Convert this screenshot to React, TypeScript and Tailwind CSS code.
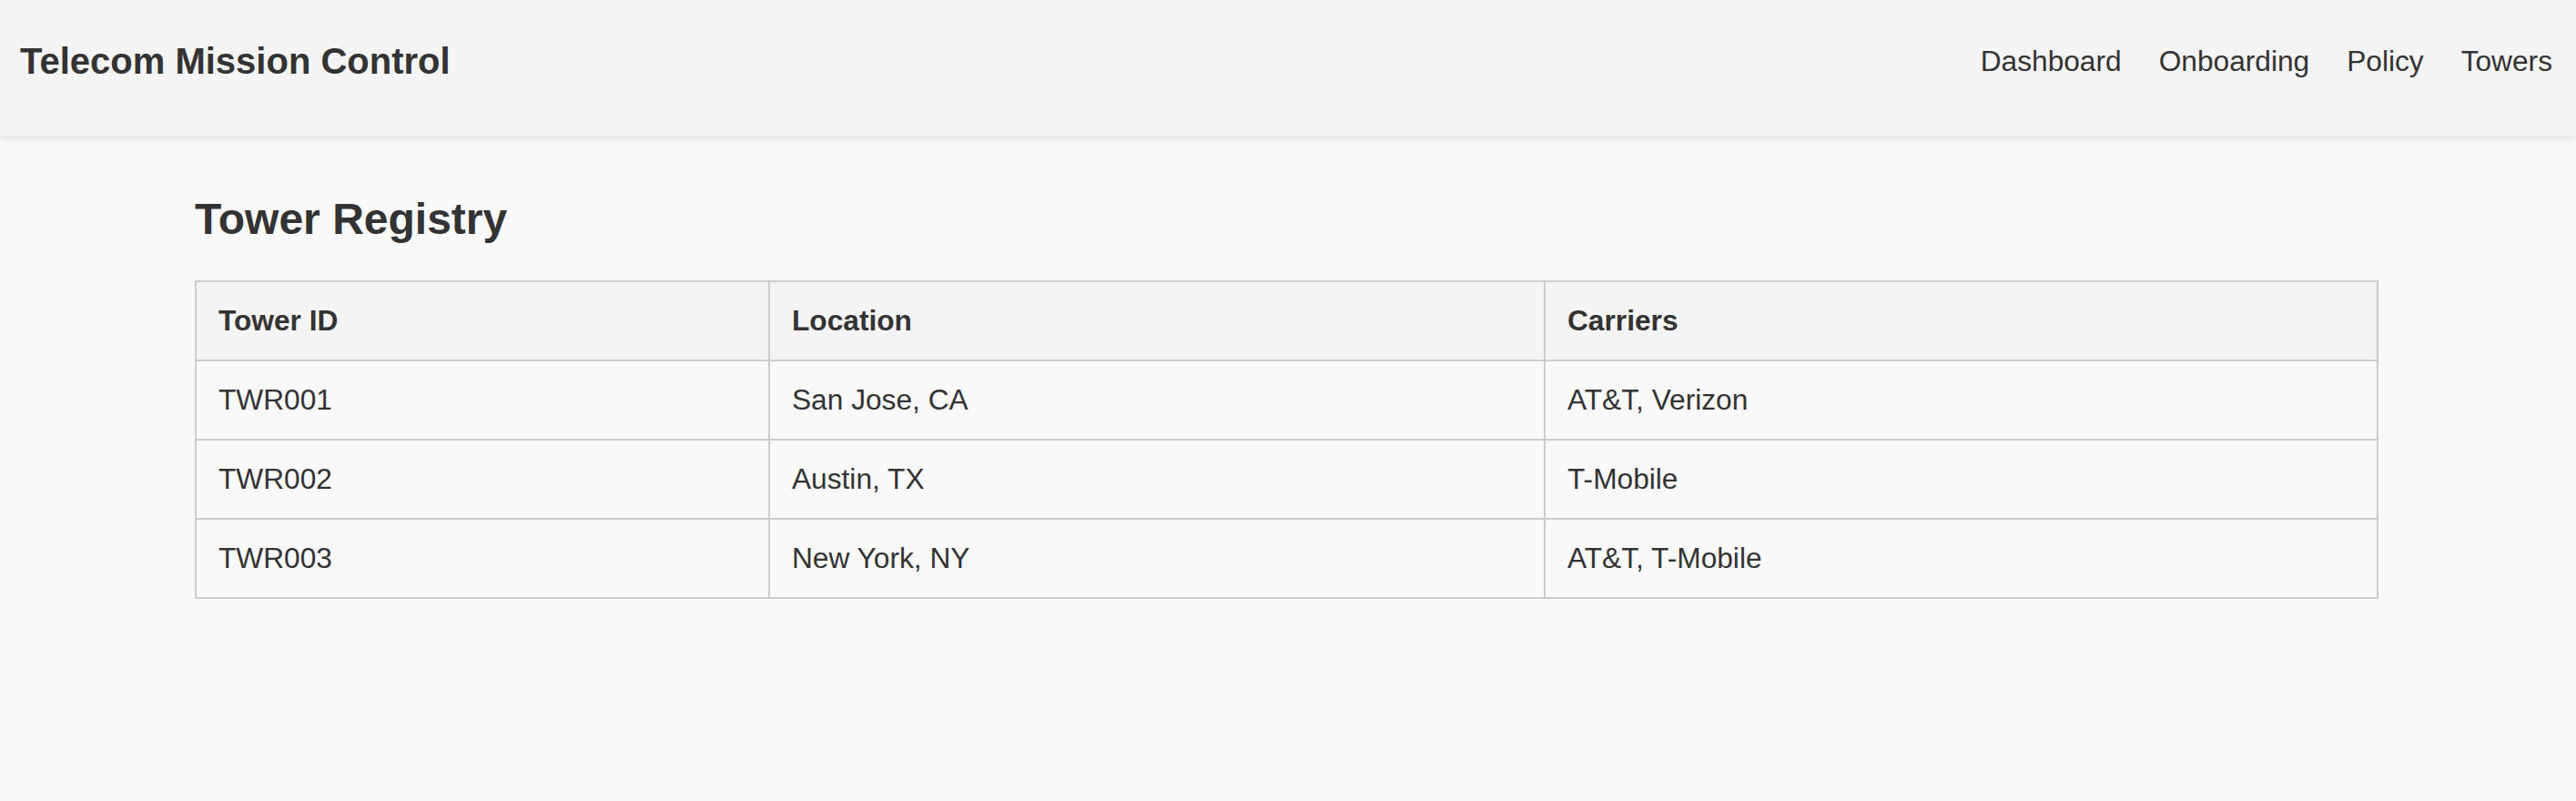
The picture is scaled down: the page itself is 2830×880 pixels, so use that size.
import React from "react";

const rows = [
  { id: "TWR001", loc: "San Jose, CA", carriers: "AT&T, Verizon" },
  { id: "TWR002", loc: "Austin, TX", carriers: "T-Mobile" },
  { id: "TWR003", loc: "New York, NY", carriers: "AT&T, T-Mobile" },
];

export default function App() {
  return (
    <div className="min-h-[880px] bg-[#f9f9f9] text-[#333333] font-['Liberation_Sans',Arial,sans-serif]">
      <header className="relative z-10 flex h-[149px] items-center justify-between bg-[#f4f4f4] pb-[15px] pl-[22px] pr-[26px] shadow-[0_3px_8px_rgba(0,0,0,0.1)]">
        <h1 className="text-[40px] font-bold leading-[46px]">Telecom Mission Control</h1>
        <nav className="flex gap-[41px] text-[31.68px] leading-[36px]">
          <a href="#">Dashboard</a>
          <a href="#">Onboarding</a>
          <a href="#">Policy</a>
          <a href="#">Towers</a>
        </nav>
      </header>
      <main className="pl-[214px] pt-[64px]">
        <h2 className="text-[48px] font-bold leading-[55px]">Tower Registry</h2>
        <table className="mt-[40px] w-[2399px] border-collapse text-[31.68px] leading-[37px]">
          <colgroup>
            <col className="w-[630px]" />
            <col className="w-[852px]" />
            <col />
          </colgroup>
          <thead>
            <tr className="bg-[#f4f4f4]">
              <th className="border-2 border-[#cccccc] px-[24px] py-[24px] text-left font-bold">Tower ID</th>
              <th className="border-2 border-[#cccccc] px-[24px] py-[24px] text-left font-bold">Location</th>
              <th className="border-2 border-[#cccccc] px-[24px] py-[24px] text-left font-bold">Carriers</th>
            </tr>
          </thead>
          <tbody>
            {rows.map((r) => (
              <tr key={r.id}>
                <td className="border-2 border-[#cccccc] px-[24px] py-[24px]">{r.id}</td>
                <td className="border-2 border-[#cccccc] px-[24px] py-[24px]">{r.loc}</td>
                <td className="border-2 border-[#cccccc] px-[24px] py-[24px]">{r.carriers}</td>
              </tr>
            ))}
          </tbody>
        </table>
      </main>
    </div>
  );
}
